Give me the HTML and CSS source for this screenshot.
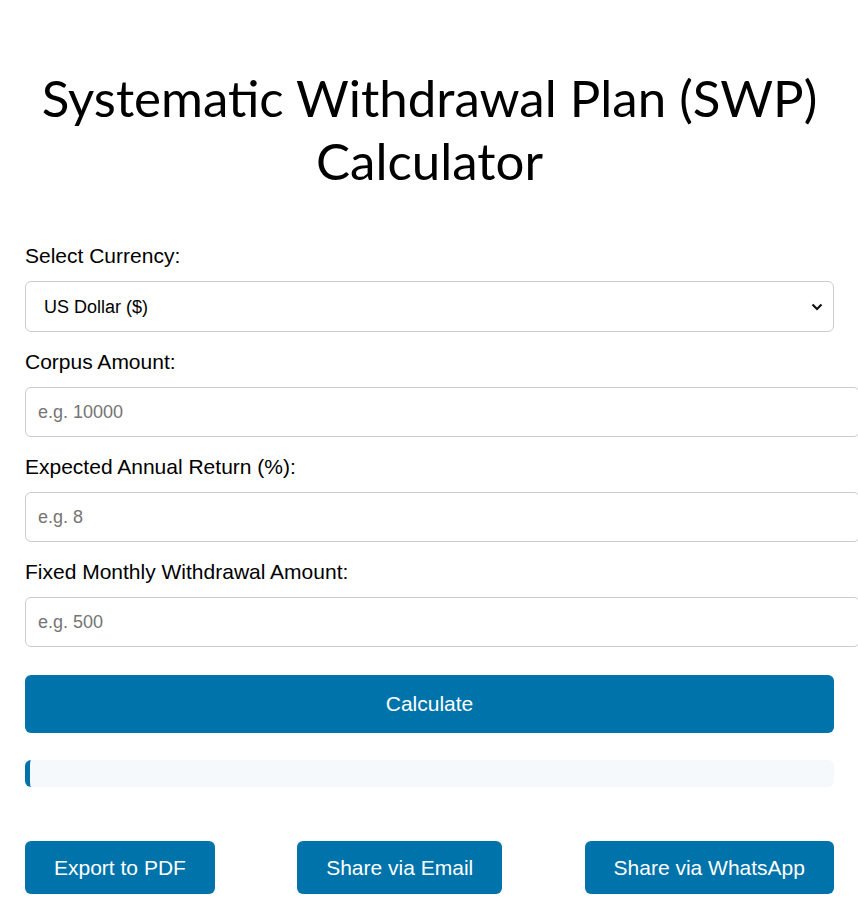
FILE: index.html
```html
<!DOCTYPE html>
<html lang="en">
<head>
    <meta charset="UTF-8">
    <meta name="viewport" content="width=device-width, initial-scale=1.0">
    <title>Systematic Withdrawal Plan (SWP) Calculator</title>
    <link rel="stylesheet" href="styles.css">
</head>
<body>

<div class="calculator">
    <h1>Systematic Withdrawal Plan (SWP) Calculator</h1>

    <label for="currency">Select Currency:</label>
    <div class="select-wrap">
        <select id="currency">
            <option value="USD">US Dollar ($)</option>
            <option value="EUR">Euro (€)</option>
            <option value="INR">Indian Rupee (₹)</option>
        </select>
        <svg class="chevron" width="12" height="8" viewBox="0 0 12 8">
            <path d="M1.5 1.5 L6 6 L10.5 1.5" fill="none" stroke="#111" stroke-width="2.2"/>
        </svg>
    </div>

    <label for="corpus">Corpus Amount:</label>
    <input type="number" id="corpus" placeholder="e.g. 10000">

    <label for="returnRate">Expected Annual Return (%):</label>
    <input type="number" id="returnRate" placeholder="e.g. 8">

    <label for="withdrawal">Fixed Monthly Withdrawal Amount:</label>
    <input type="number" id="withdrawal" placeholder="e.g. 500">

    <button class="btn-calc">Calculate</button>

    <div id="result" class="result"></div>

    <div class="share-row">
        <button class="btn-share">Export to PDF</button>
        <button class="btn-share">Share via Email</button>
        <button class="btn-share">Share via WhatsApp</button>
    </div>
</div>

</body>
</html>
```

FILE: styles.css
```css
body {
    margin: 0;
    font-family: 'Liberation Sans', Arial, sans-serif;
    color: #000;
    background: #fff;
}

.calculator {
    padding: 0 24px 20px 25px;
}

h1 {
    font-family: Lato, 'Liberation Sans', sans-serif;
    font-weight: 400;
    font-size: 51px;
    line-height: 63px;
    text-align: center;
    margin: 0;
    padding: 66px 0 52px;
}

label {
    display: block;
    font-size: 21px;
    line-height: 24px;
    margin-bottom: 13px;
}

select,
input {
    display: block;
    width: 100%;
    font-family: 'Liberation Sans', Arial, sans-serif;
    font-size: 18px;
    border: 1px solid #ccc;
    border-radius: 6px;
    background: #fff;
    margin-bottom: 18px;
}

.select-wrap {
    position: relative;
}

select {
    appearance: none;
    -webkit-appearance: none;
    box-sizing: border-box;
    height: 51px;
    padding: 0 30px 0 18px;
    color: #000;
}

.chevron {
    position: absolute;
    right: 11px;
    top: 22px;
    pointer-events: none;
}

input {
    padding: 12px;
    line-height: 24px;
}

input::placeholder {
    color: #757575;
}

.btn-calc {
    display: block;
    width: 100%;
    height: 58px;
    margin-top: 28px;
    background: #0073aa;
    color: #fff;
    border: none;
    border-radius: 6px;
    font-family: 'Liberation Sans', Arial, sans-serif;
    font-size: 21px;
}

.result {
    margin-top: 27px;
    height: 27px;
    background: #f5f9fc;
    border-left: 5px solid #0073aa;
    border-radius: 6px;
}

.share-row {
    display: flex;
    justify-content: space-between;
    margin-top: 54px;
}

.btn-share {
    background: #0073aa;
    color: #fff;
    border: none;
    border-radius: 6px;
    padding: 14px 29px;
    line-height: 25px;
    font-family: 'Liberation Sans', Arial, sans-serif;
    font-size: 21px;
}
```
